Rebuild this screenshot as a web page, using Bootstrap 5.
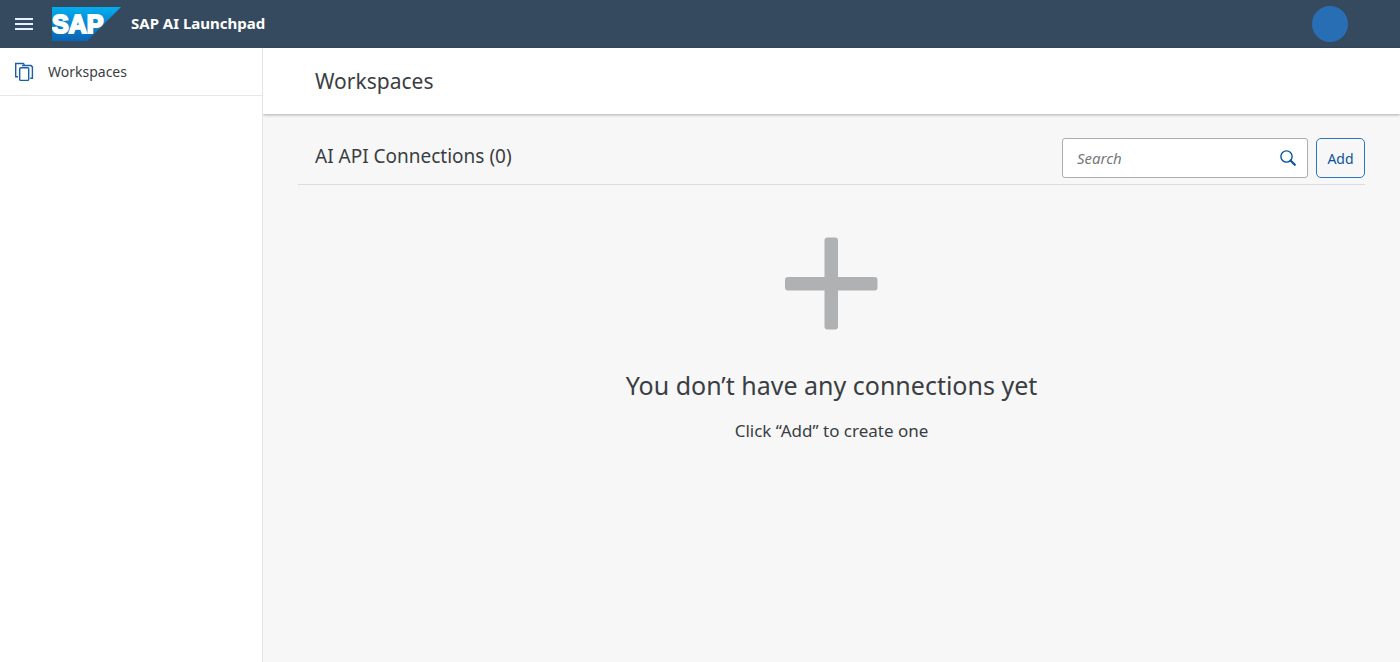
<!DOCTYPE html>
<html lang="en">
<head>
<meta charset="utf-8">
<meta name="viewport" content="width=device-width, initial-scale=1">
<title>SAP AI Launchpad</title>
<link href="https://cdn.jsdelivr.net/npm/bootstrap@5.3.0/dist/css/bootstrap.min.css" rel="stylesheet">
<style>
  body { font-family: "Noto Sans", "Open Sans", sans-serif; color: #3a3e43; font-size: 14px; line-height: 20px; }
  .shell { background: #354a5f; height: 48px; }
  .shell-title { font-size: 15px; font-weight: 700; line-height: 20px; color: #fff; margin-left: 10px; padding-bottom: 2px; }
  .menu-btn { width: 48px; height: 48px; }
  .avatar { width: 36px; height: 36px; background: #286eb4; margin-right: 52px; }
  .side { width: 263px; border-right: 1px solid #e4e5e6; }
  .side-link { height: 48px; border-bottom: 1px solid #e6e7e8; color: #3a3e43; padding: 0 14px; gap: 14px; }
  .content { overflow-x: clip; background: #f7f7f7; }
  .page-head { height: 66px; padding: 0 52px; box-shadow: 0 1px 3px rgba(0,0,0,.3); }
  .page-title { font-size: 21px; line-height: 28px; }
  .workarea { padding: 24px 35px; }
  .toolbar { border-bottom: 1px solid #dcdddf; padding: 0 0 6px 17px; }
  .section-title { font-size: 19px; line-height: 24px; padding-bottom: 4px; }
  .search-box { width: 246px; height: 40px; border: 1px solid #a9aeb4; border-radius: 3px; }
  .search-box input { padding: 0 0 0 14px; font-size: 15px; }
  .search-box input::placeholder { font-style: italic; color: #74777a; opacity: 1; }
  .search-btn { width: 38px; }
  .add-btn { width: 49px; height: 40px; border: 1px solid #2f75bb; border-radius: 5px; color: #0854a0; font-size: 14px; }
  .empty-icon { margin-top: 52px; }
  .empty-title { font-size: 25px; line-height: 32px; margin-top: 38px; }
  .empty-text { font-size: 17px; line-height: 24px; margin-top: 18px; }
</style>
</head>
<body class="d-flex flex-column min-vh-100">
  <header class="shell d-flex align-items-center">
    <button class="menu-btn btn p-0 border-0 rounded-0 d-flex align-items-center justify-content-center" type="button" aria-label="Menu">
      <svg width="18" height="14" viewBox="0 0 18 14" fill="#e4f0fb"><path d="M0 1h18v2H0zM0 6h18v2H0zM0 11h18v2H0z"/></svg>
    </button>
    <a href="#" class="d-flex align-items-center text-decoration-none ps-1">
      <svg width="69" height="34" viewBox="0 0 69 34" aria-label="SAP">
        <defs><linearGradient id="logo" x1="0" y1="0" x2="0" y2="1"><stop offset="0" stop-color="#00aeef"/><stop offset=".5" stop-color="#0a86d1"/><stop offset="1" stop-color="#0a64b4"/></linearGradient></defs>
        <path d="M0 0h69L35 34H0z" fill="url(#logo)"/>
        <text x="0" y="26" font-family="Liberation Sans, Arial, sans-serif" font-weight="700" font-size="25" fill="#fff" stroke="#fff" stroke-width="2">SAP</text>
      </svg>
      <span class="shell-title">SAP AI Launchpad</span>
    </a>
    <button class="avatar btn border-0 rounded-circle p-0 ms-auto" type="button" aria-label="Profile"></button>
  </header>

  <div class="d-flex flex-grow-1">
    <nav class="side bg-white flex-shrink-0">
      <a href="#" class="side-link d-flex align-items-center text-decoration-none">
        <svg width="20" height="20" viewBox="0 0 20 20" fill="none" stroke="#1a5fa8" stroke-width="1.400"><path d="M4 14.800H1.700V1.500h7.600l1.200 1.200"/><path d="M8 3.500h9l1.400 1.400v11.300h-2.200"/><rect x="5.700" y="5.700" width="9" height="12.700" rx="1"/></svg>
        <span>Workspaces</span>
      </a>
    </nav>

    <main class="content flex-grow-1 d-flex flex-column">
      <div class="page-head bg-white d-flex align-items-center">
        <h1 class="page-title fw-normal mb-0">Workspaces</h1>
      </div>
      <section class="workarea flex-grow-1">
        <div class="toolbar d-flex align-items-center gap-2">
          <h2 class="section-title fw-normal mb-0 me-auto">AI API Connections (0)</h2>
          <form class="search-box d-flex bg-white">
            <input class="form-control border-0 shadow-none bg-transparent" type="search" placeholder="Search" aria-label="Search">
            <button class="search-btn btn border-0 p-0 flex-shrink-0 d-flex align-items-center justify-content-center" type="submit" aria-label="Search">
              <svg width="16" height="16" viewBox="0 0 16 16" fill="none" stroke="#0854a0"><circle cx="6.500" cy="6.500" r="5.600" stroke-width="1.400"/><path d="M10.500 10.500l4.300 4.300" stroke-width="2.200" stroke-linecap="round"/></svg>
            </button>
          </form>
          <button class="add-btn btn p-0" type="button">Add</button>
        </div>
        <div class="text-center">
          <svg class="empty-icon d-block mx-auto" width="94" height="94" viewBox="0 0 94 94" fill="#b0b1b3"><rect x="39.500" y="0.500" width="13.500" height="92" rx="3"/><rect y="40" width="92.500" height="13.500" rx="3"/></svg>
          <h3 class="empty-title fw-normal mb-0">You don’t have any connections yet</h3>
          <p class="empty-text mb-0">Click “Add” to create one</p>
        </div>
      </section>
    </main>
  </div>
<script src="https://cdn.jsdelivr.net/npm/bootstrap@5.3.0/dist/js/bootstrap.bundle.min.js"></script>
</body>
</html>
